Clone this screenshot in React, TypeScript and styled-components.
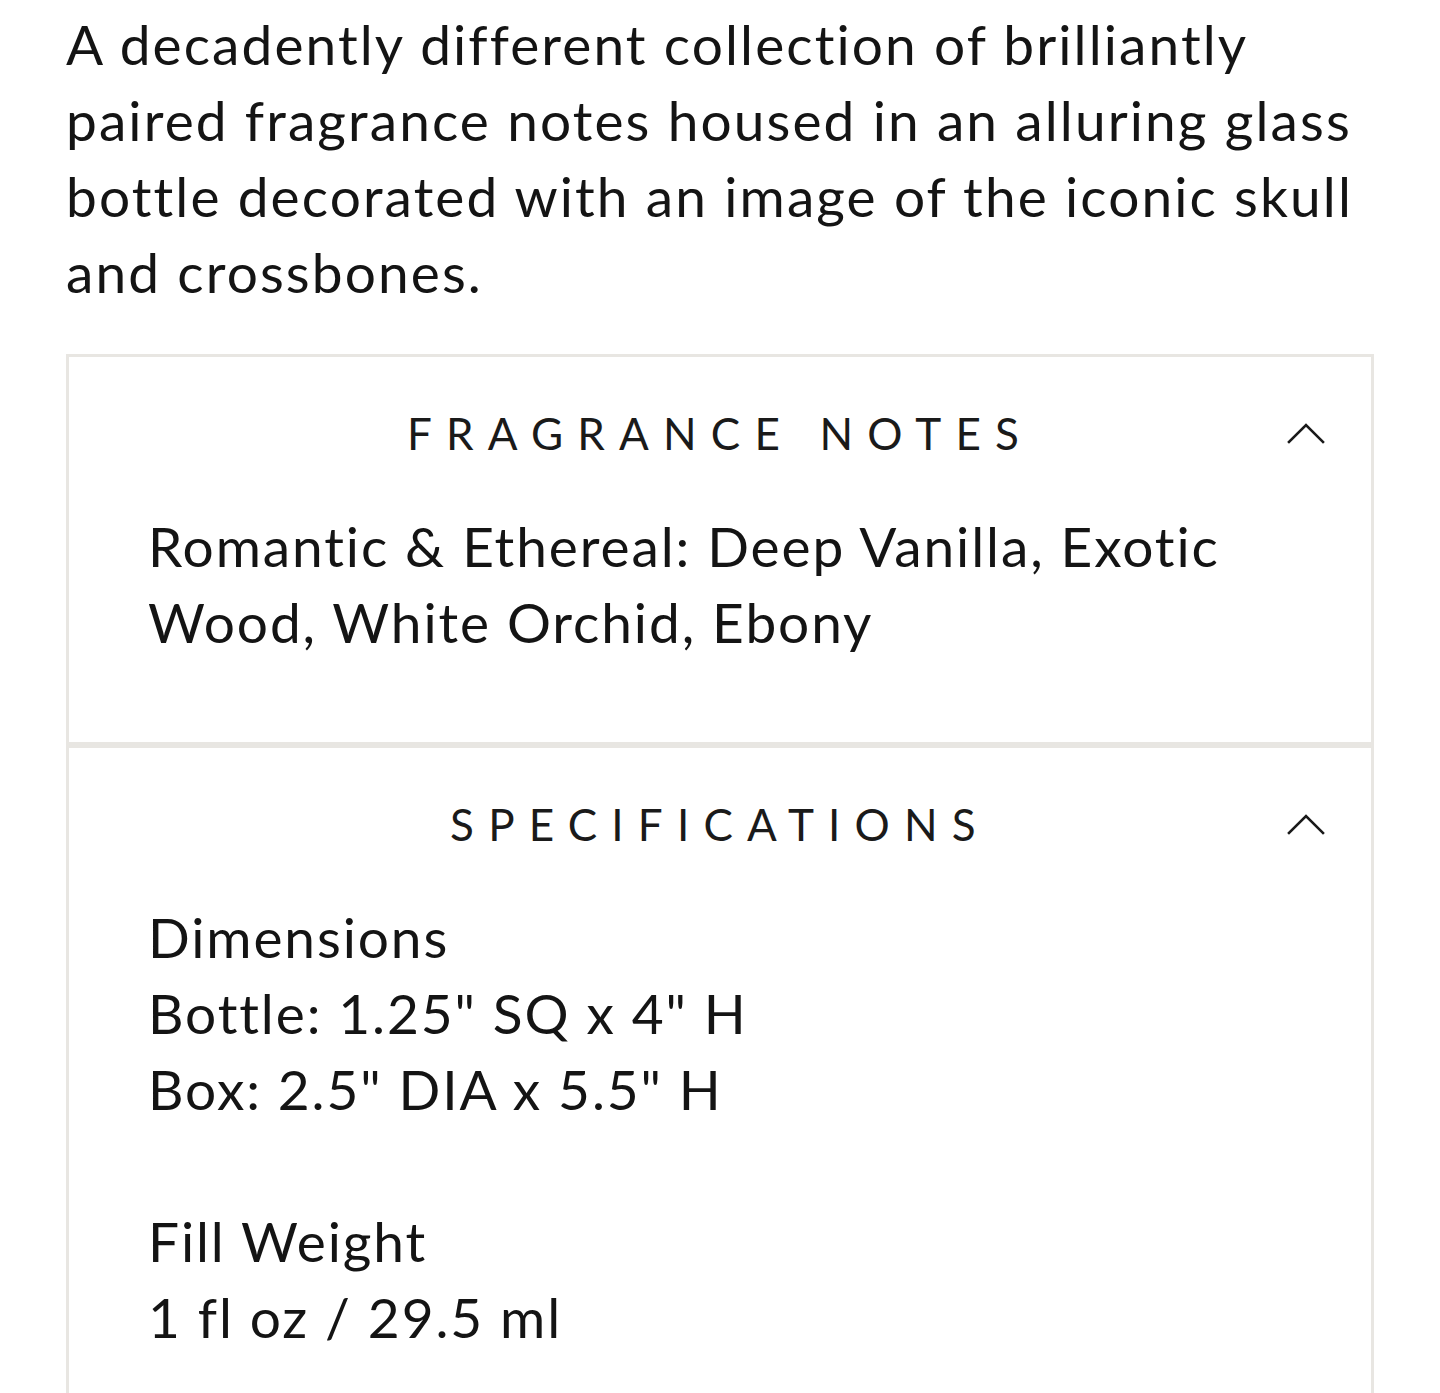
import React from "react";
import styled, { createGlobalStyle } from "styled-components";

const GlobalStyle = createGlobalStyle`
  html, body {
    margin: 0;
    padding: 0;
    background: #ffffff;
  }
  body {
    font-family: Lato, "Noto Sans", "Liberation Sans", sans-serif;
    color: #141414;
    font-variant-ligatures: none;
    font-feature-settings: "liga" 0, "clig" 0;
    -webkit-font-smoothing: antialiased;
  }
`;

const Page = styled.main`
  padding: 6px 66px 0;
  box-sizing: border-box;
  width: 1440px;
`;

const Description = styled.p`
  margin: 0 0 44px;
  font-size: 55px;
  line-height: 76px;
  letter-spacing: 2.1px;
  font-weight: 400;
  color: #141414;
`;

const Accordion = styled.section`
  display: flex;
  flex-direction: column;
`;

const Item = styled.div`
  border: 3px solid #e8e6e2;
  background: #fff;
`;

const Header = styled.button`
  display: grid;
  grid-template-columns: 1fr auto 1fr;
  align-items: center;
  width: 100%;
  padding: 50px 46px 0;
  margin: 0;
  border: 0;
  background: transparent;
  cursor: pointer;
  font: inherit;
  color: inherit;
`;

const Title = styled.span`
  grid-column: 2;
  font-size: 44px;
  line-height: 1.2;
  letter-spacing: 14.2px;
  text-transform: uppercase;
  font-weight: 400;
  color: #1a1a1a;
  white-space: nowrap;
`;

const Chevron = styled.svg`
  grid-column: 3;
  justify-self: end;
  width: 38px;
  height: 22px;
`;

const Body = styled.div`
  padding: 48px 79px 82px;
  display: flex;
  flex-direction: column;
  gap: 76px;
`;

const Text = styled.p`
  margin: 0;
  font-size: 55px;
  line-height: 76px;
  letter-spacing: 1.9px;
  color: #141414;
`;

const Line = styled.span`
  display: block;
`;

const ChevronUp = () => (
  <Chevron viewBox="0 0 38 22" aria-hidden="true">
    <path
      d="M2 20 L19 3 L36 20"
      fill="none"
      stroke="#1a1a1a"
      strokeWidth="2.6"
      strokeLinecap="square"
    />
  </Chevron>
);

const Section = ({ title, children }: { title: string; children: React.ReactNode }) => (
  <Item>
    <Header type="button" aria-expanded="true">
      <Title>{title}</Title>
      <ChevronUp />
    </Header>
    <Body>{children}</Body>
  </Item>
);

export default function App() {
  return (
    <>
      <GlobalStyle />
      <Page>
        <Description>
          A decadently different collection of brilliantly paired fragrance notes housed in an
          alluring glass bottle decorated with an image of the iconic skull and crossbones.
        </Description>
        <Accordion>
          <Section title="Fragrance Notes">
            <Text>Romantic &amp; Ethereal: Deep Vanilla, Exotic Wood, White Orchid, Ebony</Text>
          </Section>
          <Section title="Specifications">
            <Text>
              <Line>Dimensions</Line>
              <Line>Bottle: 1.25" SQ x 4" H</Line>
              <Line>Box: 2.5" DIA x 5.5" H</Line>
            </Text>
            <Text>
              <Line>Fill Weight</Line>
              <Line>1 fl oz / 29.5 ml</Line>
            </Text>
          </Section>
        </Accordion>
      </Page>
    </>
  );
}
